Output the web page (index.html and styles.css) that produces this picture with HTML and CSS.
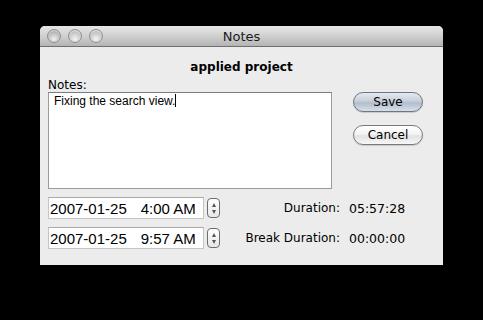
FILE: index.html
```html
<!DOCTYPE html>
<html lang="en">
<head>
    <meta charset="UTF-8">
    <title>Notes</title>
    <link rel="stylesheet" href="styles.css">
</head>
<body>
    <div class="window">
        <div class="titlebar">
            <div class="lights">
                <span class="light"></span>
                <span class="light"></span>
                <span class="light"></span>
            </div>
            <div class="title">Notes</div>
        </div>

        <div class="content">
            <h1 class="project">applied project</h1>

            <div class="top-row">
                <div class="notes-col">
                    <label class="notes-label">Notes:</label>
                    <div class="notes-box">Fixing the search view.<span class="caret"></span></div>
                </div>
                <div class="buttons">
                    <button class="btn btn-default">Save</button>
                    <button class="btn">Cancel</button>
                </div>
            </div>

            <div class="times">
                <div class="date-field"><span>2007-01-25</span><span>4:00 AM</span></div>
                <div class="stepper"><span class="up"></span><span class="down"></span></div>
                <div class="dur-label">Duration:</div>
                <div class="dur-value">05:57:28</div>

                <div class="date-field"><span>2007-01-25</span><span>9:57 AM</span></div>
                <div class="stepper"><span class="up"></span><span class="down"></span></div>
                <div class="dur-label">Break Duration:</div>
                <div class="dur-value">00:00:00</div>
            </div>
        </div>
    </div>
</body>
</html>
```

FILE: styles.css
```css
* {
    box-sizing: border-box;
    margin: 0;
    padding: 0;
}

body {
    background: #000;
    font-family: 'DejaVu Sans', sans-serif;
    color: #000;
}

.window {
    width: 403px;
    margin: 26px 0 0 40px;
    background: #ececec;
    border-radius: 5px 5px 0 0;
    overflow: hidden;
}

.titlebar {
    position: relative;
    height: 21px;
    background: linear-gradient(#e6e6e6, #d0d0d0 50%, #b4b4b4);
    border-bottom: 1px solid #6f6f6f;
    display: flex;
    align-items: center;
    justify-content: center;
}

.lights {
    position: absolute;
    left: 7px;
    top: 3px;
    display: flex;
    gap: 7px;
}

.light {
    width: 14px;
    height: 14px;
    border-radius: 50%;
    border: 1px solid #8e8e8e;
    background: radial-gradient(circle at 50% 75%, #f4f4f4, #c9c9c9 55%, #a7a7a7);
    box-shadow: inset 0 1px 1px rgba(255, 255, 255, 0.7);
}

.light:first-child {
    background: radial-gradient(circle at 50% 75%, #f0f0f0, #bdbdbd 55%, #8c8c8c);
}

.title {
    font-size: 13px;
    color: #1a1a1a;
}

.content {
    padding: 12px 20px 16px 8px;
}

.project {
    font-size: 12px;
    font-weight: bold;
    text-align: center;
    margin-left: 12px;
    line-height: 16px;
}

.top-row {
    display: flex;
    justify-content: space-between;
    margin-top: 3px;
}

.notes-label {
    display: block;
    font-size: 12px;
    line-height: 14px;
}

.notes-box {
    width: 284px;
    height: 97px;
    background: #fff;
    border: 1px solid #9a9a9a;
    border-top-color: #7c7c7c;
    padding: 1px 5px;
    font-family: 'Liberation Sans', sans-serif;
    font-size: 12px;
    line-height: 14px;
}

.caret {
    display: inline-block;
    width: 1px;
    height: 13px;
    background: #000;
    vertical-align: -2px;
}

.buttons {
    display: flex;
    flex-direction: column;
    gap: 13px;
    padding-top: 14px;
}

.btn {
    width: 70px;
    height: 20px;
    border-radius: 10px;
    border: 1px solid #7a7a7a;
    background: linear-gradient(#ffffff, #f3f3f3 45%, #e2e2e2 55%, #f7f7f7);
    font-family: 'DejaVu Sans', sans-serif;
    font-size: 12px;
    color: #000;
    box-shadow: 0 1px 1px rgba(0, 0, 0, 0.15);
}

.btn-default {
    border-color: #6e7684;
    background: linear-gradient(#e6eaf0, #c6ceda 45%, #b2bdcc 55%, #d8dfe8);
}

.times {
    display: grid;
    grid-template-columns: 156px 13px 1fr 74px;
    column-gap: 3px;
    row-gap: 8px;
    align-items: center;
    margin-top: 8px;
}

.date-field {
    height: 22px;
    background: #fff;
    border: 1px solid #c4c4c4;
    border-top-color: #a9a9a9;
    display: flex;
    align-items: center;
    gap: 14px;
    padding-left: 1px;
    font-family: 'Liberation Sans', sans-serif;
    font-size: 15px;
    white-space: nowrap;
}

.stepper {
    width: 13px;
    height: 20px;
    border: 1px solid #6d6d6d;
    border-radius: 4px;
    background: linear-gradient(#ffffff, #e6e6e6);
    display: flex;
    flex-direction: column;
    align-items: center;
    justify-content: space-around;
    padding: 2px 0;
}

.up, .down {
    width: 0;
    height: 0;
    border-left: 2.5px solid transparent;
    border-right: 2.5px solid transparent;
}

.up {
    border-bottom: 4px solid #555;
}

.down {
    border-top: 4px solid #555;
}

.dur-label {
    font-size: 12px;
    text-align: right;
    padding-right: 6px;
    white-space: nowrap;
}

.dur-value {
    font-size: 12.5px;
    white-space: nowrap;
}
```
